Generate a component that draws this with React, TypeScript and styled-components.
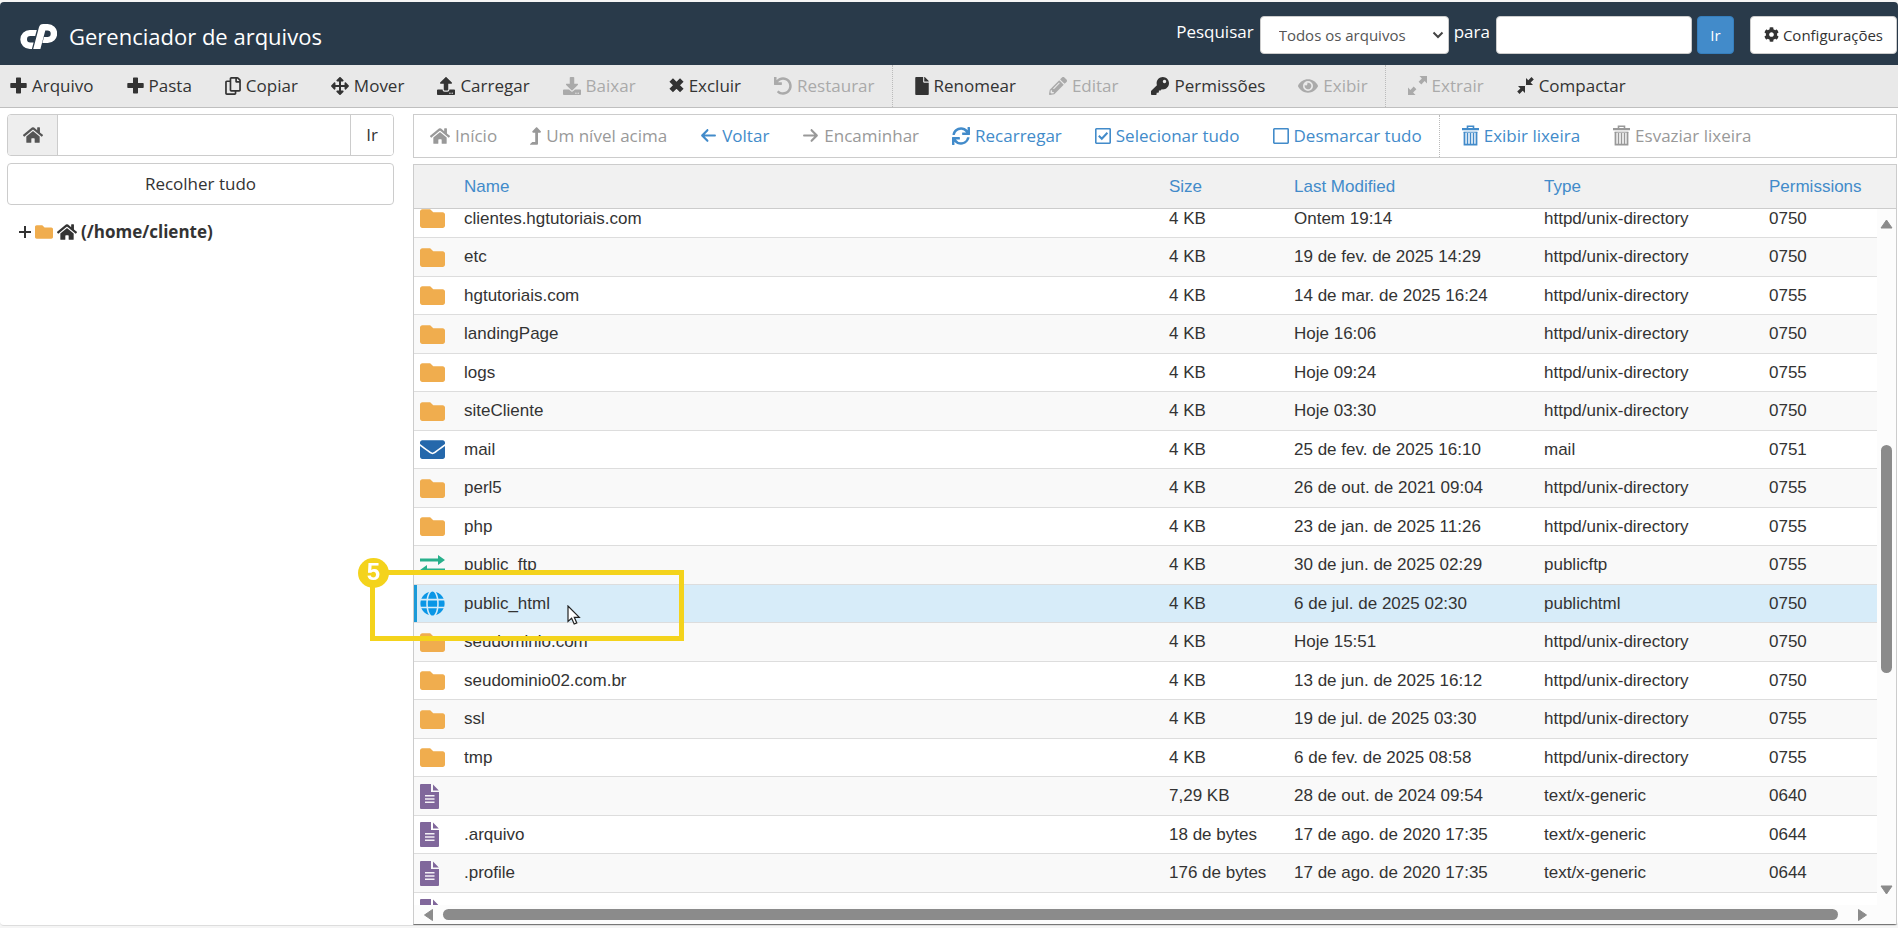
import React, { useLayoutEffect, useRef } from "react";
import styled, { createGlobalStyle, css } from "styled-components";
import {
  FaFolder,
  FaHome,
  FaUpload,
  FaDownload,
  FaUndo,
  FaFile,
  FaKey,
  FaEye,
  FaPencilAlt,
  FaArrowsAlt,
  FaRegCopy,
  FaLevelUpAlt,
  FaSync,
  FaEnvelope,
  FaGlobe,
  FaCog,
} from "react-icons/fa";
import { FaArrowLeft, FaArrowRight } from "react-icons/fa6";

const sans = `"Open Sans", "Liberation Sans", sans-serif`;
const arial = `"Liberation Sans", Arial, sans-serif`;
const link = "#428bca";
const line = "#cccccc";

const GlobalStyle = createGlobalStyle`
  *, *::before, *::after { box-sizing: border-box; }
  body { margin: 0; background: #f5f5f5; color: #333; font-family: ${sans}; font-size: 17px; line-height: 24px; }
  button, input, select { font: inherit; color: inherit; margin: 0; }
`;

/* ---------- icons ---------- */

const Logo = () => (
  <svg width="37" height="25" viewBox="0 0 37 25" fill="currentColor" aria-hidden="true">
    <path d="M9.800 6H16.800L15.200 12H10.300a3.300 3.300 0 0 0 0 6.600H13.600L11.900 25H9.800A9.500 9.500 0 0 1 9.800 6z" />
    <path d="M13.200 25 18.900 3.400Q19.800 0 23.200 0H27.700A9.300 9.300 0 0 1 27.700 19H22.400L24 13H27.400a3.300 3.300 0 0 0 0-6.600H25.300L20.400 25z" />
  </svg>
);

const FileIcon = styled(FaFile)`
  width: 14px;
`;

const CopyIcon = styled(FaRegCopy)`
  width: 16px;
`;

const LevelUpIcon = styled(FaLevelUpAlt)`
  width: 11px;
`;

const PlusIcon = () => (
  <svg width="17" height="17" viewBox="0 0 17 17" fill="currentColor" aria-hidden="true">
    <path d="M6 1.3q0-.7.7-.7h3.600q.7 0 .7.7V6h5q.7 0 .7.7v3.600q0 .7-.7.7h-5v4.700q0 .7-.7.7H6.700q-.7 0-.7-.7V11H1q-.7 0-.7-.7V6.700Q.3 6 1 6h5z" />
  </svg>
);

const CrossIcon = () => (
  <svg width="15" height="17" viewBox="0 0 15 17" fill="none" stroke="currentColor" strokeWidth="5" aria-hidden="true">
    <path d="M2.200 3 12.800 13.600M12.800 3 2.200 13.600" />
  </svg>
);

const ExpandIcon = () => (
  <svg width="19" height="19" viewBox="0 0 19 19" fill="currentColor" aria-hidden="true">
    <path d="M11.500 0H19v7.500l-2.400-2.400-3.300 3.300-2.700-2.700 3.300-3.300zM0 11.500l2.400 2.400 3.300-3.300 2.700 2.700-3.300 3.300L7.500 19H0z" />
  </svg>
);

const CompressIcon = () => (
  <svg width="17" height="17" viewBox="0 0 17 17" fill="currentColor" aria-hidden="true">
    <path d="M9 8V1l2.300 2.300L14.500.1l2.300 2.300-3.200 3.200L16 8zM8 9v7l-2.300-2.300-3.200 3.200L.2 14.600l3.200-3.200L1 9z" />
  </svg>
);

const CheckedBoxIcon = () => (
  <svg width="16" height="16" viewBox="0 0 16 16" fill="none" stroke="currentColor" strokeWidth="1.600" aria-hidden="true">
    <rect x=".8" y=".8" width="14.400" height="14.400" rx=".6" />
    <path d="m3.800 7.800 3 3 5.600-6" strokeWidth="2" />
  </svg>
);

const EmptyBoxIcon = () => (
  <svg width="16" height="16" viewBox="0 0 16 16" fill="none" stroke="currentColor" strokeWidth="1.600" aria-hidden="true">
    <rect x=".8" y=".8" width="14.400" height="14.400" rx=".6" />
  </svg>
);

const TrashIcon = () => (
  <svg width="17" height="21" viewBox="0 0 17 21" fill="none" stroke="currentColor" aria-hidden="true">
    <path d="M5.500 4V1.200h6V4" strokeWidth="1.600" />
    <path d="M0 4.200h17" strokeWidth="2.200" />
    <path d="M2.500 7v12.600h12V7" strokeWidth="1.800" />
    <path d="M1.600 7.200h13.800" strokeWidth="1" />
    <path d="M5.500 8v11M8.500 8v11M11.500 8v11" strokeWidth="1.500" />
  </svg>
);

const TransferIcon = () => (
  <svg width="25" height="20" viewBox="0 0 25 20" fill="currentColor" aria-hidden="true">
    <path d="M0 3.500h18V0l7 5-7 5V6.500H0zM25 13.500H7V10l-7 5 7 5v-3.500h18z" />
  </svg>
);

const DocumentIcon = () => (
  <svg width="19" height="25" viewBox="0 0 19 25" fill="currentColor" aria-hidden="true">
    <path d="M1 0h10v8h8v16q0 1-1 1H1q-1 0-1-1V1q0-1 1-1zM13 .5 18.800 6.500H13z" />
    <path d="M5 11.700h9.500M5 15h9.500M5 18.300h9.500" stroke="#f4f1f6" strokeWidth="1.500" />
  </svg>
);

const PointerIcon = () => (
  <svg width="14" height="20" viewBox="0 0 14 20" aria-hidden="true">
    <path d="M1 1v15.500l3.600-3.300 2.600 5.800 2.600-1.100-2.500-5.600h5z" fill="#fff" stroke="#222" strokeWidth="1.200" />
  </svg>
);

const ChevronIcon = () => (
  <svg width="12" height="8" viewBox="0 0 12 8" fill="none" stroke="currentColor" strokeWidth="2" aria-hidden="true">
    <path d="m1.500 1.500 4.500 4.500 4.500-4.500" />
  </svg>
);

/* ---------- header ---------- */

const Page = styled.div`
  display: flex;
  flex-direction: column;
  height: calc(100vh - 4px);
  margin-top: 2px;
  min-height: 420px;
  background: #fff;
  border-bottom: 1px solid #ddd;
  border-radius: 4px;
  overflow: hidden;
`;

const Header = styled.header`
  display: flex;
  align-items: center;
  flex: 0 0 63px;
  padding: 0 1px 0 20px;
  background: #293a4a;
  color: #fff;
`;

const Title = styled.h1`
  flex: 1;
  margin: 0 0 0 12px;
  padding-top: 4px;
  font-size: 22px;
  font-weight: 400;
  line-height: 32px;
`;

const Brand = styled.span`
  display: flex;
  padding-top: 6px;
`;

const SearchForm = styled.form`
  display: flex;
  align-items: center;
  gap: 5px;
  padding-top: 2px;
`;

const SearchLabel = styled.label`
  padding: 0 1px 5px 0;
`;

const controlBox = css`
  height: 38px;
  border: 1px solid ${line};
  border-radius: 4px;
  background: #fff;
  color: #333;
  font-size: 15px;
`;

const SelectWrap = styled.span`
  position: relative;
  display: block;
  width: 189px;
  color: #444;

  svg {
    position: absolute;
    right: 5px;
    top: 15px;
    pointer-events: none;
  }
`;

const Select = styled.select`
  ${controlBox}
  appearance: none;
  width: 100%;
  padding: 0 24px 0 18px;
  color: #555;
`;

const SearchInput = styled.input`
  ${controlBox}
  width: 196px;
  padding: 0 12px;
`;

const GoButton = styled.button`
  ${controlBox}
  width: 37px;
  padding: 0;
  border-color: #357ebd;
  background: ${link};
  color: #fff;
`;

const SettingsButton = styled.button`
  ${controlBox}
  display: flex;
  align-items: center;
  gap: 4px;
  margin-left: 11px;
  padding: 0 13px;
`;

/* ---------- tool bars ---------- */

const Toolbar = styled.div`
  display: flex;
  flex: 0 0 43px;
  background: #e9e9e9;
  border-bottom: 1px solid #bfbfbf;
`;

const Group = styled.div<{ $inset: number }>`
  display: flex;
  gap: 33px;
  padding: 0 17px 0 22px;

  &:first-child {
    padding-left: ${(p) => p.$inset}px;
  }

  & + & {
    border-left: 1px dotted #bbb;
  }
`;

const Tool = styled.button<{ $tone?: "link" }>`
  display: flex;
  align-items: center;
  gap: 5px;
  padding: 0 0 1px;
  border: 0;
  background: none;
  color: ${(p) => (p.$tone === "link" ? link : "#333")};
  white-space: nowrap;

  &:disabled {
    color: ${(p) => (p.$tone === "link" ? "#999" : "#aaa")};
  }
`;

const NavBar = styled.div`
  display: flex;
  flex: 0 0 44px;
  border: 1px solid ${line};
`;

/* ---------- side bar ---------- */

const Body = styled.div`
  display: flex;
  flex: 1;
  min-height: 0;
`;

const Sidebar = styled.aside`
  flex: 0 0 413px;
  padding: 6px 19px 0 7px;
`;

const PathForm = styled.form`
  display: flex;
  height: 42px;
  border: 1px solid ${line};
  border-radius: 4px;
  overflow: hidden;
`;

const PathHome = styled.label`
  display: flex;
  align-items: center;
  justify-content: center;
  width: 50px;
  background: #eee;
  border-right: 1px solid ${line};
  color: #555;
`;

const PathInput = styled.input`
  flex: 1;
  min-width: 0;
  padding: 0 12px;
  border: 0;
`;

const PathGo = styled.button`
  width: 43px;
  padding: 0;
  border: 0;
  border-left: 1px solid ${line};
  background: #fff;
`;

const CollapseButton = styled.button`
  width: 100%;
  height: 42px;
  margin-top: 7px;
  border: 1px solid ${line};
  border-radius: 4px;
  background: #fff;
`;

const TreeNode = styled.div`
  display: flex;
  align-items: center;
  gap: 4px;
  margin-top: 15px;
  padding-left: 12px;
  font-weight: 700;
`;

const TreeToggle = styled.button`
  display: flex;
  padding: 0;
  border: 0;
  background: none;
`;

/* ---------- file list ---------- */

const Content = styled.main`
  display: flex;
  flex: 1;
  flex-direction: column;
  gap: 6px;
  min-width: 0;
  padding: 6px 1px 0 0;
`;

const ListPanel = styled.section`
  position: relative;
  display: grid;
  grid-template-columns: minmax(0, 1fr) 19px;
  grid-template-rows: minmax(0, 1fr) 19px;
  flex: 1;
  min-height: 0;
  border: 1px solid ${line};
  border-bottom-color: #777;
`;

const Scroller = styled.div`
  overflow: auto;
  scrollbar-width: none;
`;

const Table = styled.table`
  width: 100%;
  table-layout: fixed;
  border-collapse: separate;
  border-spacing: 0;
  font-family: ${arial};
  line-height: 24px;
`;

const HeadCell = styled.th<{ $w?: number }>`
  position: sticky;
  top: 0;
  z-index: 1;
  width: ${(p) => (p.$w ? `${p.$w}px` : "auto")};
  height: 44px;
  padding: 0;
  background: #f1f1f1;
  border-bottom: 1px solid ${line};
  color: ${link};
  font-weight: 400;
  text-align: left;
`;

const Row = styled.tr<{ $selected?: boolean }>`
  height: 38px;

  &:nth-child(even) {
    height: 39px;
    background: #f9f9f9;
  }

  && {
    ${(p) => p.$selected && "background: #d7ecf9; box-shadow: inset 3px 0 #1b9ad8;"}
  }
`;

const Cell = styled.td`
  padding: 0;
  border-bottom: 1px solid #ddd;
  white-space: nowrap;
`;

const kindColor = {
  folder: "#f0ad4e",
  mail: "#2568ab",
  ftp: "#28b08c",
  web: "#0a96e6",
  file: "#80679b",
};

type Kind = keyof typeof kindColor;

const IconCell = styled(Cell)<{ $kind: Kind }>`
  padding-left: 6px;
  color: ${(p) => kindColor[p.$kind]};

  svg {
    display: block;
  }
`;

/* ---------- scroll bars ---------- */

const VRail = styled.div`
  display: flex;
  flex-direction: column;
  align-items: center;
  background: #fcfcfc;
`;

const RailCap = styled.div`
  flex: 0 0 44px;
  align-self: stretch;
  background: #f1f1f1;
  border-bottom: 1px solid ${line};
`;

const VTrack = styled.div`
  display: flex;
  flex: 1;
  flex-direction: column;
  width: 11px;
  margin: 4px 0;
`;

const HRail = styled.div`
  display: flex;
  align-items: center;
  padding: 0 8px;
  gap: 8px;
  background: #fcfcfc;
`;

const HTrack = styled.div`
  flex: 1;
  padding-right: 10px;
`;

const Thumb = styled.div`
  height: 11px;
  border-radius: 6px;
  background: #8b8b8b;
`;

const VThumb = styled(Thumb)`
  flex: 230 0 0;
`;

const VSpace = styled.div<{ $grow: number }>`
  flex: ${(p) => p.$grow} 0 0;
`;

const Corner = styled.div`
  background: #fcfcfc;
`;

const arrowPaths = {
  up: "M6 2 11.500 10H.5z",
  down: "M6 10 11.500 2H.5z",
  left: "M2 6 10 .5v11z",
  right: "M10 6 2 .5v11z",
};

const ArrowSvg = styled.svg`
  flex: none;
  display: block;
`;

const ScrollArrow = ({ dir }: { dir: keyof typeof arrowPaths }) => (
  <ArrowSvg width="13" height="12" viewBox="0 0 12 12" fill="#8b8b8b" aria-hidden="true">
    <path d={arrowPaths[dir]} stroke="#8b8b8b" strokeLinejoin="round" />
  </ArrowSvg>
);

const VArrowSlot = styled.div<{ $before: number; $after: number }>`
  padding: ${(p) => p.$before}px 0 ${(p) => p.$after}px;
`;

/* ---------- step marker over the list ---------- */

const StepFrame = styled.div`
  position: absolute;
  z-index: 2;
  left: -44px;
  top: 405px;
  width: 314px;
  height: 71px;
  border: 5px solid #f4d31c;
  pointer-events: none;
`;

const StepNumber = styled.span`
  position: absolute;
  left: -17px;
  top: -17px;
  width: 31px;
  height: 30px;
  border-radius: 50%;
  background: #f4d31c;
  color: #fff;
  font: 700 24px/27px ${arial};
  text-align: center;
`;

const Pointer = styled.span`
  position: absolute;
  left: 192px;
  top: 30px;
`;

/* ---------- data ---------- */

type ToolItem = { label: string; icon: React.ReactNode; off?: boolean };

const fileTools: ToolItem[][] = [
  [
    { label: "Arquivo", icon: <PlusIcon /> },
    { label: "Pasta", icon: <PlusIcon /> },
    { label: "Copiar", icon: <CopyIcon size={18} /> },
    { label: "Mover", icon: <FaArrowsAlt size={18} /> },
    { label: "Carregar", icon: <FaUpload size={18} /> },
    { label: "Baixar", icon: <FaDownload size={18} />, off: true },
    { label: "Excluir", icon: <CrossIcon /> },
    { label: "Restaurar", icon: <FaUndo size={18} />, off: true },
  ],
  [
    { label: "Renomear", icon: <FileIcon size={18} /> },
    { label: "Editar", icon: <FaPencilAlt size={18} />, off: true },
    { label: "Permissões", icon: <FaKey size={18} /> },
    { label: "Exibir", icon: <FaEye size={20} />, off: true },
  ],
  [
    { label: "Extrair", icon: <ExpandIcon />, off: true },
    { label: "Compactar", icon: <CompressIcon /> },
  ],
];

const navTools: ToolItem[][] = [
  [
    { label: "Início", icon: <FaHome size={20} />, off: true },
    { label: "Um nível acima", icon: <LevelUpIcon size={18} />, off: true },
    { label: "Voltar", icon: <FaArrowLeft size={17} /> },
    { label: "Encaminhar", icon: <FaArrowRight size={17} />, off: true },
    { label: "Recarregar", icon: <FaSync size={18} /> },
    { label: "Selecionar tudo", icon: <CheckedBoxIcon /> },
    { label: "Desmarcar tudo", icon: <EmptyBoxIcon /> },
  ],
  [
    { label: "Exibir lixeira", icon: <TrashIcon /> },
    { label: "Esvaziar lixeira", icon: <TrashIcon />, off: true },
  ],
];

const dir = "httpd/unix-directory";
const text = "text/x-generic";

const files: [Kind, string, string, string, string, string][] = [
  ["folder", "clientes.hgtutoriais.com", "4 KB", "Ontem 19:14", dir, "0750"],
  ["folder", "etc", "4 KB", "19 de fev. de 2025 14:29", dir, "0750"],
  ["folder", "hgtutoriais.com", "4 KB", "14 de mar. de 2025 16:24", dir, "0755"],
  ["folder", "landingPage", "4 KB", "Hoje 16:06", dir, "0750"],
  ["folder", "logs", "4 KB", "Hoje 09:24", dir, "0755"],
  ["folder", "siteCliente", "4 KB", "Hoje 03:30", dir, "0750"],
  ["mail", "mail", "4 KB", "25 de fev. de 2025 16:10", "mail", "0751"],
  ["folder", "perl5", "4 KB", "26 de out. de 2021 09:04", dir, "0755"],
  ["folder", "php", "4 KB", "23 de jan. de 2025 11:26", dir, "0755"],
  ["ftp", "public_ftp", "4 KB", "30 de jun. de 2025 02:29", "publicftp", "0755"],
  ["web", "public_html", "4 KB", "6 de jul. de 2025 02:30", "publichtml", "0750"],
  ["folder", "seudominio.com", "4 KB", "Hoje 15:51", dir, "0750"],
  ["folder", "seudominio02.com.br", "4 KB", "13 de jun. de 2025 16:12", dir, "0750"],
  ["folder", "ssl", "4 KB", "19 de jul. de 2025 03:30", dir, "0755"],
  ["folder", "tmp", "4 KB", "6 de fev. de 2025 08:58", dir, "0755"],
  ["file", "", "7,29 KB", "28 de out. de 2024 09:54", text, "0640"],
  ["file", ".arquivo", "18 de bytes", "17 de ago. de 2020 17:35", text, "0644"],
  ["file", ".profile", "176 de bytes", "17 de ago. de 2020 17:35", text, "0644"],
  ["file", "", "", "", "", ""],
];

const kindIcon: Record<Kind, React.ReactNode> = {
  folder: <FaFolder size={25} />,
  mail: <FaEnvelope size={25} />,
  ftp: <TransferIcon />,
  web: <FaGlobe size={25} />,
  file: <DocumentIcon />,
};

const ToolGroups = ({ groups, inset, tone }: { groups: ToolItem[][]; inset: number; tone?: "link" }) => (
  <>
    {groups.map((group, i) => (
      <Group key={i} $inset={inset}>
        {group.map((t) => (
          <Tool key={t.label} type="button" disabled={t.off} $tone={tone}>
            {t.icon}
            {t.label}
          </Tool>
        ))}
      </Group>
    ))}
  </>
);

const FileTable = () => {
  const scroller = useRef<HTMLDivElement>(null);

  useLayoutEffect(() => {
    if (scroller.current) scroller.current.scrollTop = 9;
  }, []);

  return (
    <Scroller ref={scroller}>
      <Table>
        <thead>
          <tr>
            <HeadCell $w={50} />
            <HeadCell>Name</HeadCell>
            <HeadCell $w={125}>Size</HeadCell>
            <HeadCell $w={250}>Last Modified</HeadCell>
            <HeadCell $w={225}>Type</HeadCell>
            <HeadCell $w={108}>Permissions</HeadCell>
          </tr>
        </thead>
        <tbody>
          {files.map(([kind, ...cells], i) => (
            <Row key={i} $selected={kind === "web"}>
              <IconCell $kind={kind}>{kindIcon[kind]}</IconCell>
              {cells.map((value, j) => (
                <Cell key={j}>{value}</Cell>
              ))}
            </Row>
          ))}
        </tbody>
      </Table>
    </Scroller>
  );
};

export default function App() {
  return (
    <>
      <GlobalStyle />
      <Page>
        <Header>
          <Brand>
            <Logo />
          </Brand>
          <Title>Gerenciador de arquivos</Title>
          <SearchForm onSubmit={(e) => e.preventDefault()}>
            <SearchLabel htmlFor="scope">Pesquisar</SearchLabel>
            <SelectWrap>
              <Select id="scope">
                <option>Todos os arquivos</option>
              </Select>
              <ChevronIcon />
            </SelectWrap>
            <SearchLabel htmlFor="query">para</SearchLabel>
            <SearchInput id="query" type="text" />
            <GoButton type="submit">Ir</GoButton>
            <SettingsButton type="button">
              <FaCog size={15} />
              Configurações
            </SettingsButton>
          </SearchForm>
        </Header>
        <Toolbar>
          <ToolGroups groups={fileTools} inset={10} />
        </Toolbar>
        <Body>
          <Sidebar>
            <PathForm onSubmit={(e) => e.preventDefault()}>
              <PathHome htmlFor="path">
                <FaHome size={20} />
              </PathHome>
              <PathInput id="path" type="text" />
              <PathGo type="submit">Ir</PathGo>
            </PathForm>
            <CollapseButton type="button">Recolher tudo</CollapseButton>
            <TreeNode>
              <TreeToggle type="button">
                <svg width="12" height="12" viewBox="0 0 12 12" stroke="#333" strokeWidth="2" aria-hidden="true">
                  <path d="M6 0v12M0 6h12" />
                </svg>
              </TreeToggle>
              <FaFolder size={18} color="#f0ad4e" />
              <FaHome size={20} />
              (/home/cliente)
            </TreeNode>
          </Sidebar>
          <Content>
            <NavBar>
              <ToolGroups groups={navTools} inset={16} tone="link" />
            </NavBar>
            <ListPanel>
              <FileTable />
              <VRail>
                <RailCap />
                <VArrowSlot $before={9} $after={0}>
                  <ScrollArrow dir="up" />
                </VArrowSlot>
                <VTrack>
                  <VSpace $grow={212} />
                  <VThumb />
                  <VSpace $grow={208} />
                </VTrack>
                <VArrowSlot $before={0} $after={9}>
                  <ScrollArrow dir="down" />
                </VArrowSlot>
              </VRail>
              <HRail>
                <ScrollArrow dir="left" />
                <HTrack>
                  <Thumb />
                </HTrack>
                <ScrollArrow dir="right" />
              </HRail>
              <Corner />
              <StepFrame>
                <StepNumber>5</StepNumber>
                <Pointer>
                  <PointerIcon />
                </Pointer>
              </StepFrame>
            </ListPanel>
          </Content>
        </Body>
      </Page>
    </>
  );
}
